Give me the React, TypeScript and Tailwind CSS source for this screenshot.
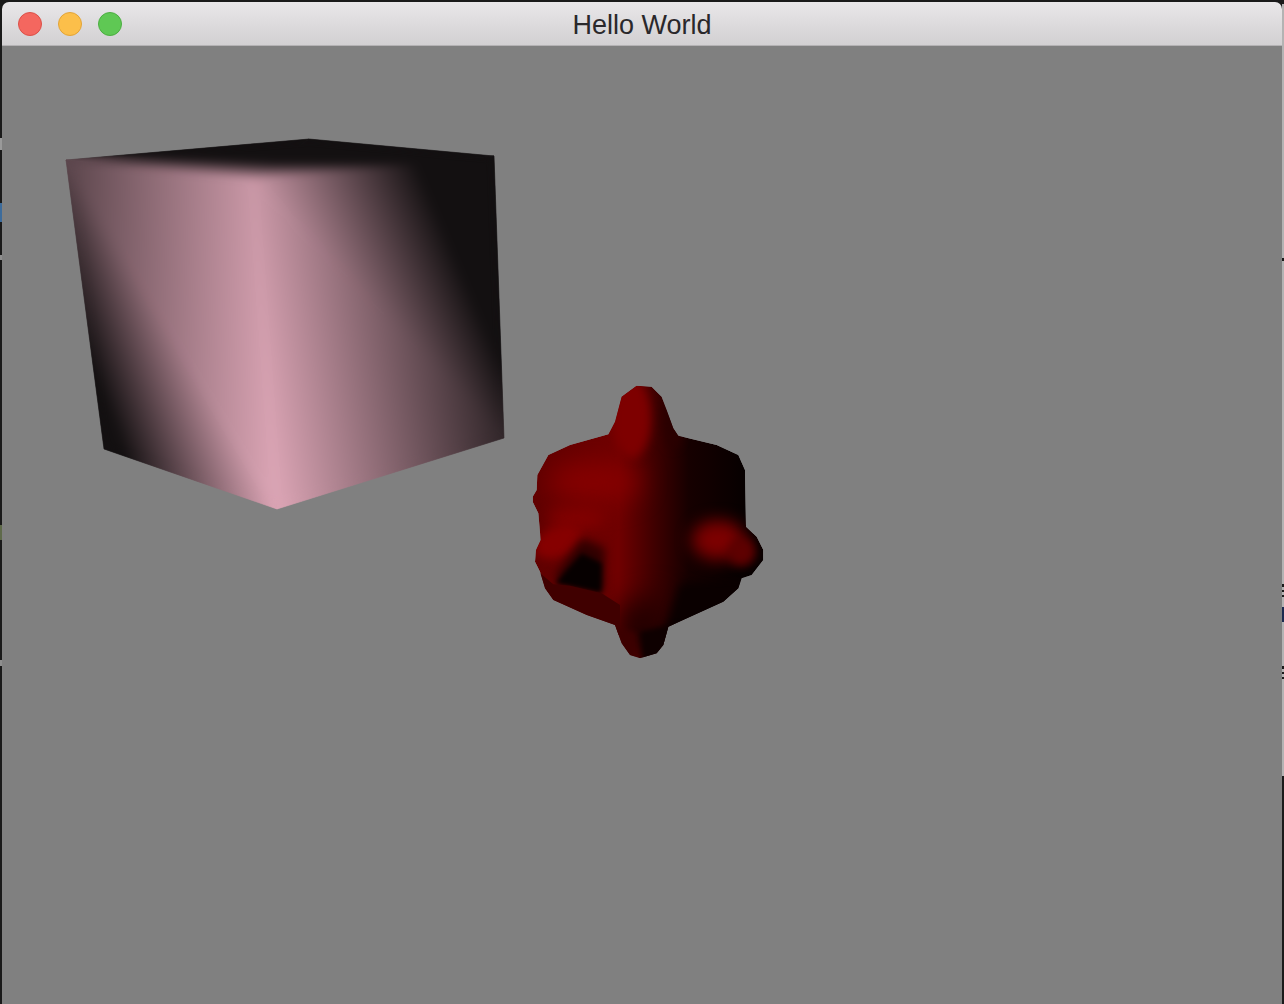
import React from "react";

type V = [number, number, number];

// A Gouraud-shaded triangle is exactly a linear gradient between the t=0 and t=1 lines.
function gradientFor(a: V, b: V, c: V) {
  const ux = b[0] - a[0], uy = b[1] - a[1], ud = b[2] - a[2];
  const vx = c[0] - a[0], vy = c[1] - a[1], vd = c[2] - a[2];
  const det = ux * vy - uy * vx;
  const gx = (ud * vy - uy * vd) / det;
  const gy = (ux * vd - ud * vx) / det;
  const m = gx * gx + gy * gy;
  const s0 = (0 - a[2]) / m;
  const s1 = (1 - a[2]) / m;
  return { x1: a[0] + gx * s0, y1: a[1] + gy * s0, x2: a[0] + gx * s1, y2: a[1] + gy * s1 };
}

const TL: V = [66, 160, 0.36];
const BACK: V = [309, 139, -1.25];
const TR: V = [494, 156, -0.43];
const CORNER: V = [253, 180, 0.92];
const BR: V = [504, 438, 0.15];
const BOTTOM: V = [277, 509, 1.02];
const BL: V = [104, 449, -0.14];

const tris: V[][] = [
  [TL, BACK, CORNER],
  [BACK, TR, CORNER],
  [TL, CORNER, BOTTOM],
  [TL, BOTTOM, BL],
  [CORNER, TR, BR],
  [CORNER, BR, BOTTOM],
];

const cubeOutline = "66,160 309,139 494,156 504,438 277,509 104,449";

const blobOutline =
  "350,32 395,35 425,65 440,105 460,160 475,182 590,210 655,240 675,285 678,455 710,485 730,525 730,555 695,600 665,610 655,640 610,680 445,755 430,810 410,835 360,850 330,840 305,805 285,750 200,720 100,675 75,640 60,590 45,560 48,525 62,495 55,415 38,380 38,365 50,345 52,300 85,240 150,210 265,178 285,140 305,65";

function CubeFaces() {
  return (
    <>
      {tris.map((t, i) => (
        <polygon
          key={i}
          points={t.map((p) => `${p[0]},${p[1]}`).join(" ")}
          fill={`url(#cube${i})`}
          stroke={`url(#cube${i})`}
          strokeWidth="0.6"
        />
      ))}
    </>
  );
}

function Blur({ id, d, wide }: { id: string; d: number; wide?: boolean }) {
  const r = wide ? "-80%" : "-20%";
  const s = wide ? "260%" : "140%";
  return (
    <filter id={id} x={r} y={r} width={s} height={s} colorInterpolationFilters="sRGB">
      <feGaussianBlur stdDeviation={d} />
    </filter>
  );
}

function Scene() {
  return (
    <svg viewBox="2 46 1280 958" className="block w-full h-full">
      <defs>
        {tris.map((t, i) => {
          const g = gradientFor(t[0], t[1], t[2]);
          return (
            <linearGradient key={i} id={`cube${i}`} gradientUnits="userSpaceOnUse" x1={g.x1} y1={g.y1} x2={g.x2} y2={g.y2}>
              <stop offset="0" stopColor="#131011" />
              <stop offset="1" stopColor="#d9a3b3" />
            </linearGradient>
          );
        })}
        <clipPath id="cubeClip">
          <polygon points={cubeOutline} />
        </clipPath>
        <clipPath id="blobClip">
          <polygon points={blobOutline} />
        </clipPath>
        <linearGradient id="blobBase" gradientUnits="userSpaceOnUse" x1="60" y1="0" x2="680" y2="0">
          <stop offset="0" stopColor="#600000" />
          <stop offset="0.38" stopColor="#700000" />
          <stop offset="0.55" stopColor="#400000" />
          <stop offset="0.72" stopColor="#160000" />
          <stop offset="1" stopColor="#060000" />
        </linearGradient>
        <Blur id="b40" d={40} wide />
        <Blur id="b24" d={24} wide />
        <Blur id="b14" d={14} wide />
        <Blur id="b8" d={8} wide />
        <Blur id="b2" d={2} wide />
        <Blur id="soft" d={5} />
      </defs>

      <rect x="2" y="46" width="1280" height="958" fill="#808080" />

      <CubeFaces />
      <g clipPath="url(#cubeClip)">
        <g filter="url(#soft)">
          <CubeFaces />
        </g>
      </g>

      <g transform="translate(520 375) scale(0.33333)">
        <g clipPath="url(#blobClip)">
          <polygon points={blobOutline} fill="url(#blobBase)" />
          {/* lit top of body */}
          <ellipse cx="220" cy="320" rx="140" ry="60" fill="#860000" filter="url(#b40)" />
          <ellipse cx="170" cy="430" rx="90" ry="35" fill="#820000" filter="url(#b24)" />
          {/* lower body falloff */}
          <polygon points="290,700 420,650 470,900 290,800" fill="#240000" filter="url(#b40)" />
          {/* top spike */}
          <ellipse cx="335" cy="130" rx="58" ry="120" fill="#7e0000" filter="url(#b14)" />
          <ellipse cx="460" cy="130" rx="30" ry="90" fill="#2a0000" filter="url(#b14)" />
          {/* left bump: lit crown, wide soft shade, black core */}
          <ellipse cx="115" cy="500" rx="75" ry="46" fill="#860000" filter="url(#b14)" transform="rotate(-22 115 500)" />
          <polygon points="100,610 250,650 255,520 185,490 140,550" fill="#300000" filter="url(#b14)" />
          <polygon points="105,625 245,655 245,565 185,535 145,580" fill="#060000" filter="url(#b8)" />
          {/* body below the bump, with a crisp silhouette edge */}
          <polygon points="55,590 100,628 150,632 245,655 300,690 300,780 40,780" fill="#400000" filter="url(#b2)" />
          {/* right bump */}
          <ellipse cx="595" cy="495" rx="80" ry="60" fill="#7c0000" filter="url(#b24)" />
          <ellipse cx="665" cy="530" rx="42" ry="44" fill="#5e0000" filter="url(#b14)" />
          {/* lower right shade */}
          <polygon points="480,625 740,605 740,800 420,800" fill="#0a0000" filter="url(#b14)" />
          {/* bottom spike */}
          <polygon points="360,770 470,745 450,880 370,880" fill="#0e0000" filter="url(#b8)" />
          <polygon points="285,755 345,775 345,860 305,830" fill="#3c0000" filter="url(#b8)" />
        </g>
      </g>
    </svg>
  );
}

function Light({ fill, edge }: { fill: string; edge: string }) {
  return <span className={`block w-6 h-6 rounded-full border ${fill} ${edge}`} />;
}

export default function App() {
  return (
    <div className="flex w-[1284px] h-[1004px] overflow-hidden bg-[#1a1a1a]">
      <div className="w-[2px] shrink-0 flex flex-col pt-[138px]">
        <div className="h-[12px] bg-[#9a9a9a]" />
        <div className="h-[53px]" />
        <div className="h-[19px] bg-[#3d6c9c]" />
        <div className="h-[33px]" />
        <div className="h-[5px] bg-[#8f8f8f]" />
        <div className="h-[265px]" />
        <div className="h-[15px] bg-[#5f6a4a]" />
        <div className="h-[120px]" />
        <div className="h-[6px] bg-[#8f8f8f]" />
      </div>
      <div className="w-[1280px] shrink-0 flex flex-col pt-[2px]">
        <header className="relative h-[44px] shrink-0 flex items-center pl-4 gap-4 rounded-t-[7px] border-b border-[#b4b2b4] bg-gradient-to-b from-[#e9e7e9] to-[#d2d0d2]">
          <Light fill="bg-[#f4675f]" edge="border-[#dc5048]" />
          <Light fill="bg-[#fcbf4a]" edge="border-[#e3a437]" />
          <Light fill="bg-[#5fc854]" edge="border-[#4cae41]" />
          <h1 className="absolute inset-0 pt-[4px] flex items-center justify-center text-[27px] font-normal text-[#2a282b] font-['Liberation_Sans',Arial,sans-serif]">
            Hello World
          </h1>
        </header>
        <main className="flex-1 min-h-0">
          <Scene />
        </main>
      </div>
      <div className="w-[2px] shrink-0 flex flex-col pt-[4px] bg-[#1a1a1a]">
        <div className="h-[254px] bg-[#b3b3b3]" />
        <div className="h-[3px]" />
        <div className="h-[323px] bg-[#b3b3b3]" />
        <div className="h-[3px]" />
        <div className="h-[3px] bg-[#b3b3b3]" />
        <div className="h-[2px]" />
        <div className="h-[3px] bg-[#b3b3b3]" />
        <div className="h-[2px]" />
        <div className="h-[10px] bg-[#b3b3b3]" />
        <div className="h-[15px] bg-[#1c2a50]" />
        <div className="h-[44px] bg-[#b3b3b3]" />
        <div className="h-[3px]" />
        <div className="h-[3px] bg-[#b3b3b3]" />
        <div className="h-[2px]" />
        <div className="h-[3px] bg-[#b3b3b3]" />
        <div className="h-[2px]" />
        <div className="h-[97px] bg-[#b3b3b3]" />
      </div>
    </div>
  );
}
